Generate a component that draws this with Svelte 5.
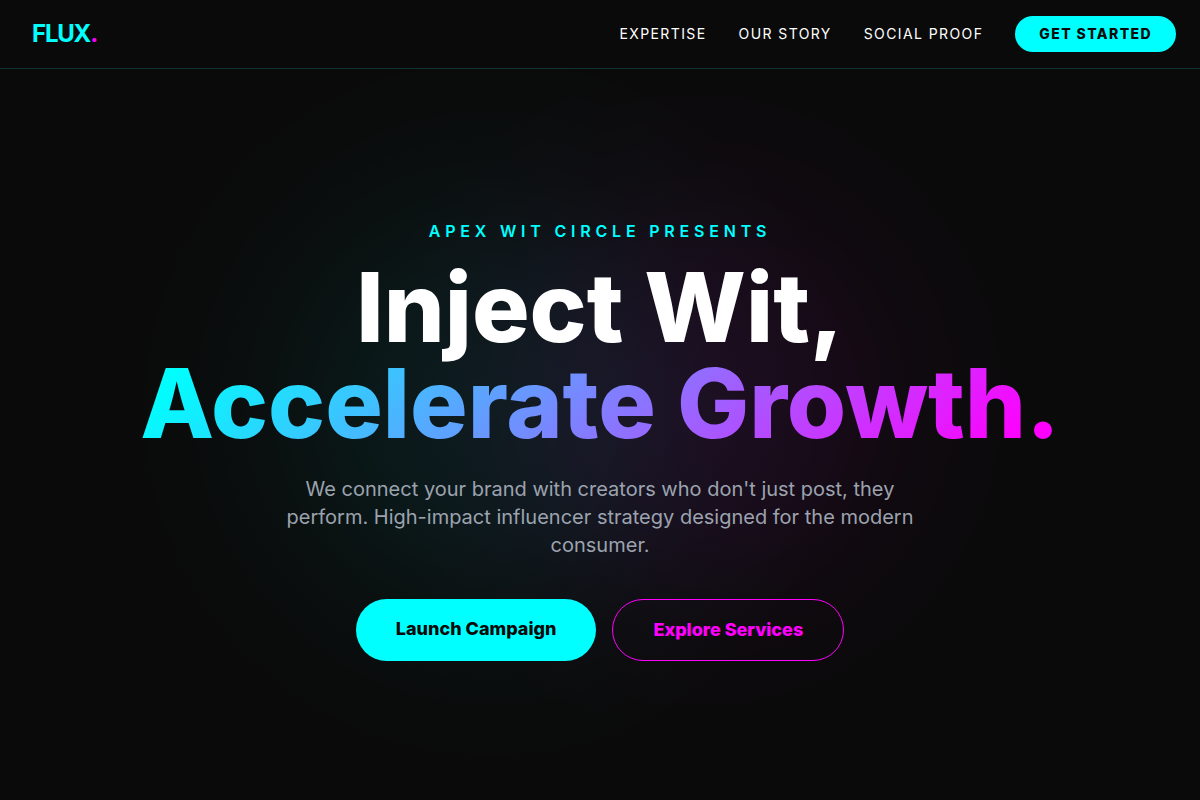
<script lang="ts">
    // ── Types ──────────────────────────────────────
    interface NavLink {
        label: string;
        href: string;
    }

    // ── Navigation ─────────────────────────────────
    const navLinks: NavLink[] = [
        { label: 'Expertise', href: '#expertise' },
        { label: 'Our Story', href: '#story' },
        { label: 'Social Proof', href: '#proof' }
    ];
</script>

<div class="page">
    <header>
        <a class="logo" href="#top">FLUX<span>.</span></a>

        <nav>
            {#each navLinks as link}
                <a class="nav-link" href={link.href}>{link.label}</a>
            {/each}
            <button class="get-started">Get Started</button>
        </nav>
    </header>

    <section class="hero" id="top">
        <p class="eyebrow">Apex Wit Circle Presents</p>
        <h1>
            <span>Inject Wit,</span>
            <span class="gradient-text">Accelerate Growth.</span>
        </h1>
        <p class="intro">
            We connect your brand with creators who don't just post, they perform.
            High-impact influencer strategy designed for the modern consumer.
        </p>
        <div class="actions">
            <a class="btn primary" href="#contact">Launch Campaign</a>
            <a class="btn outline" href="#expertise">Explore Services</a>
        </div>
    </section>
</div>

<style>
    :global(body) {
        margin: 0;
        background-color: #0a0a0a;
    }

    .page {
        min-height: 100vh;
        display: flex;
        flex-direction: column;
        box-sizing: border-box;
        color: #ffffff;
        font-family: Inter, sans-serif;
        /* cyan and magenta glow behind the headline */
        background:
            radial-gradient(circle at 41% 51%, rgba(0, 255, 255, 0.07), rgba(0, 255, 255, 0.06) 120px, rgba(0, 255, 255, 0.02) 240px, transparent 360px),
            radial-gradient(circle at 58% 50%, rgba(255, 0, 255, 0.08), rgba(255, 0, 255, 0.06) 120px, rgba(255, 0, 255, 0.02) 230px, transparent 340px),
            #0a0a0a;
    }

    a {
        text-decoration: none;
    }

    /* ── Header ── */
    header {
        display: flex;
        align-items: center;
        justify-content: space-between;
        padding: 16px 24px 16px 32px;
        background-color: #0a0a0a;
        border-bottom: 1px solid #11332f;
    }

    .logo {
        color: #00ffff;
        font-size: 24px;
        line-height: 32px;
        font-weight: 700;
        letter-spacing: -0.05em;
    }

    .logo span {
        color: #ff00ff;
    }

    nav {
        display: flex;
        align-items: center;
        gap: 32px;
    }

    .nav-link,
    .get-started {
        font-size: 14px;
        line-height: 20px;
        letter-spacing: 0.1em;
        text-transform: uppercase;
    }

    .nav-link {
        color: #ffffff;
    }

    .get-started {
        padding: 8px 24px;
        border: none;
        border-radius: 999px;
        background-color: #00ffff;
        color: #0a0a0a;
        font-family: inherit;
        font-weight: 800;
        cursor: pointer;
    }

    /* ── Hero ── */
    .hero {
        flex: 1;
        display: flex;
        flex-direction: column;
        align-items: center;
        justify-content: center;
        padding: 10px 24px 0;
        text-align: center;
    }

    .eyebrow {
        margin: 0 0 16px;
        color: #00ffff;
        font-size: 16px;
        line-height: 24px;
        font-weight: 600;
        letter-spacing: 0.3em;
        text-transform: uppercase;
    }

    h1 {
        display: flex;
        flex-direction: column;
        align-items: center;
        margin: 0 0 24px;
        font-size: 96px;
        line-height: 96px;
        font-weight: 800;
    }

    .gradient-text {
        background: linear-gradient(135deg, #00ffff 5%, #ff00ff 95%);
        -webkit-background-clip: text;
        background-clip: text;
        color: transparent;
    }

    .intro {
        max-width: 672px;
        margin: 0 0 40px;
        color: #9ca3af;
        font-size: 20px;
        line-height: 28px;
    }

    /* ── Call to action ── */
    .actions {
        display: flex;
        flex-wrap: wrap;
        justify-content: center;
        gap: 16px;
    }

    .btn {
        padding: 16px 40px;
        border-radius: 999px;
        font-size: 18px;
        line-height: 28px;
        font-weight: 800;
    }

    .primary {
        background-color: #00ffff;
        color: #0a0a0a;
    }

    .outline {
        border: 1px solid #ff00ff;
        color: #ff00ff;
    }
</style>
